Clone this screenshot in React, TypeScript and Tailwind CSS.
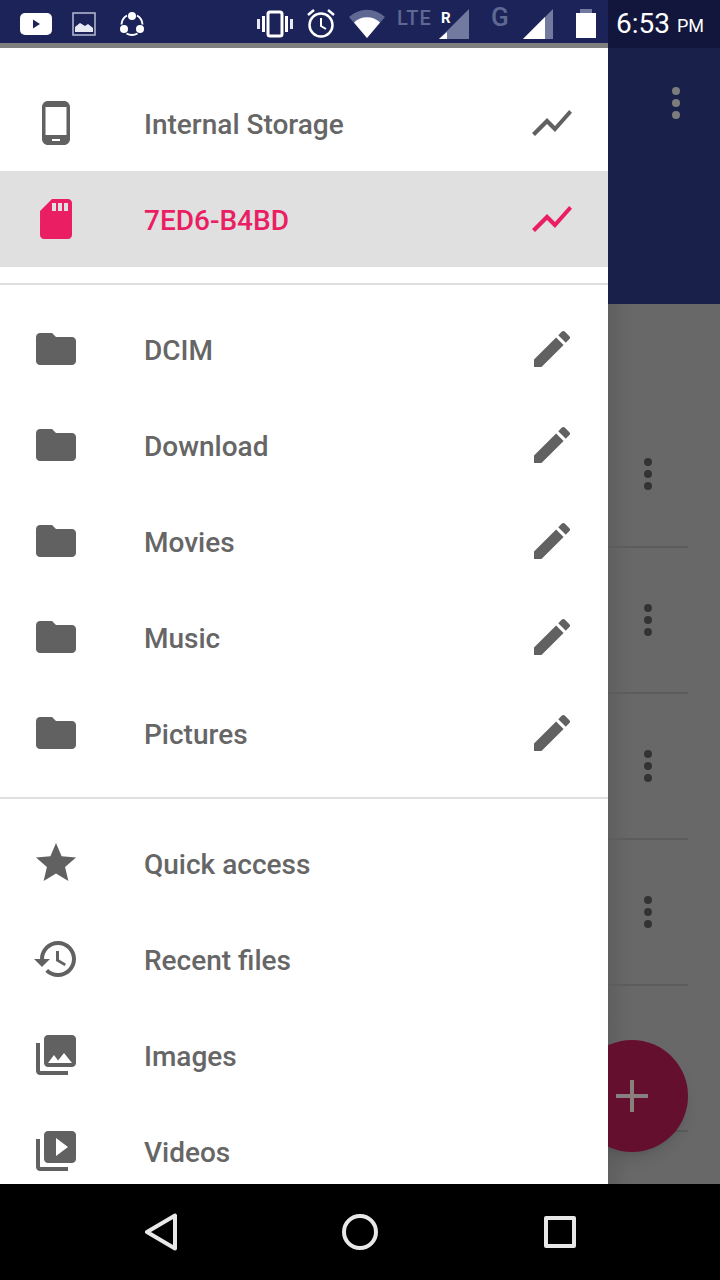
import type { ReactNode } from 'react';

const paths = {
  phone: 'M16 1H8C6.34 1 5 2.34 5 4v16c0 1.66 1.34 3 3 3h8c1.66 0 3-1.34 3-3V4c0-1.66-1.34-3-3-3zm-2 20h-4v-1h4v1zm3.25-3H6.75V4h10.5v14z',
  sd: 'M18 2h-8L4.02 8 4 20c0 1.1.9 2 2 2h12c1.1 0 2-.9 2-2V4c0-1.1-.9-2-2-2zm-6 6h-2V4h2v4zm3 0h-2V4h2v4zm3 0h-2V4h2v4z',
  chart: 'M3.5 18.49l6-6.01 4 4L22 6.92l-1.41-1.41-7.09 7.97-4-4L2 16.99z',
  folder: 'M10 4H4c-1.1 0-1.99.9-1.99 2L2 18c0 1.1.9 2 2 2h16c1.1 0 2-.9 2-2V8c0-1.1-.9-2-2-2h-8l-2-2z',
  pencil: 'M3 17.25V21h3.75L17.81 9.94l-3.75-3.75L3 17.25zM20.71 7.04c.39-.39.39-1.02 0-1.41l-2.34-2.34c-.39-.39-1.02-.39-1.41 0l-1.83 1.83 3.75 3.75 1.83-1.83z',
  star: 'M12 17.27L18.18 21l-1.64-7.03L22 9.24l-7.19-.61L12 2 9.19 8.63 2 9.24l5.46 4.73L5.82 21z',
  history: 'M13 3c-4.97 0-9 4.03-9 9H1l3.89 3.89.07.14L9 12H6c0-3.87 3.13-7 7-7s7 3.13 7 7-3.13 7-7 7c-1.93 0-3.68-.79-4.94-2.06l-1.42 1.42C8.27 19.99 10.51 21 13 21c4.97 0 9-4.03 9-9s-4.03-9-9-9zm-1 5v5l4.28 2.54.72-1.21-3.5-2.08V8H12z',
  images: 'M22 16V4c0-1.1-.9-2-2-2H8c-1.1 0-2 .9-2 2v12c0 1.1.9 2 2 2h12c1.1 0 2-.9 2-2zm-11-4l2.03 2.71L16 11l4 5H8l3-4zM2 6v14c0 1.1.9 2 2 2h14v-2H4V6H2z',
  videos: 'M4 6H2v14c0 1.1.9 2 2 2h14v-2H4V6zm16-4H8c-1.1 0-2 .9-2 2v12c0 1.1.9 2 2 2h12c1.1 0 2-.9 2-2V4c0-1.1-.9-2-2-2zm-8 12.5v-9l6 4.5-6 4.5z',
};

function Icon({ d, className }: { d: string; className?: string }) {
  return (
    <svg viewBox="0 0 24 24" className={`h-12 w-12 fill-current ${className ?? ''}`}>
      <path d={d} />
    </svg>
  );
}

function Row({ icon, label, action, selected }: { icon: string; label: string; action?: string; selected?: boolean }) {
  return (
    <div className={`flex h-24 shrink-0 items-center pl-8 pr-8 ${selected ? 'bg-[#e0e0e0] text-[#e91e63]' : 'text-[#616161]'}`}>
      <Icon d={icon} />
      <span className={`ml-16 flex-1 pt-1 text-[28px] font-medium ${selected ? '' : 'text-[#666666]'}`}>{label}</span>
      {action && <Icon d={action} />}
    </div>
  );
}

function Kebab({ dot }: { dot: string }) {
  return (
    <div className="flex flex-col gap-[4px]">
      <div className={`h-2 w-2 rounded-full ${dot}`} />
      <div className={`h-2 w-2 rounded-full ${dot}`} />
      <div className={`h-2 w-2 rounded-full ${dot}`} />
    </div>
  );
}

function StatusIcon({ w, children, className }: { w: number; children: ReactNode; className?: string }) {
  return (
    <svg width={w} height="48" viewBox={`0 0 ${w} 48`} className={`shrink-0 ${className ?? ''}`}>
      {children}
    </svg>
  );
}

function StatusBar() {
  return (
    <div className="flex h-12 shrink-0">
      <div className="flex w-[608px] flex-col">
        <div className="flex h-[43px] overflow-hidden bg-[#1b2359] pl-5">
          <StatusIcon w={32}>
            <rect x="0" y="13" width="32" height="22" rx="5" fill="#fff" />
            <path d="M13 19.5l7 4.5-7 4.5z" fill="#1b2359" />
          </StatusIcon>
          <StatusIcon w={24} className="ml-[20px]">
            <rect x="1" y="13" width="22" height="22" fill="none" stroke="#b8bdd2" strokeWidth="1.5" />
            <path d="M3 32v-5l5-4 5 3 3-2 5 4v4z" fill="#e8eaf2" />
          </StatusIcon>
          <StatusIcon w={24} className="ml-[24px]">
            <circle cx="12" cy="16" r="4" fill="#fff" />
            <circle cx="4" cy="29" r="4" fill="#fff" />
            <circle cx="20" cy="29" r="4" fill="#fff" />
            <path d="M7 15.5a11 11 0 0 0-5.5 9M17 15.5a11 11 0 0 1 5.5 9M6.5 33.5a11 11 0 0 0 11 0" fill="none" stroke="#fff" strokeWidth="2" />
          </StatusIcon>
          <StatusIcon w={36} className="ml-[113px]">
            <rect x="11" y="12" width="14" height="24" rx="2" fill="none" stroke="#fff" strokeWidth="3" />
            <rect x="0" y="19" width="3" height="10" fill="#e8eaf2" />
            <rect x="5" y="16" width="3" height="16" fill="#fff" />
            <rect x="28" y="16" width="3" height="16" fill="#fff" />
            <rect x="33" y="19" width="3" height="10" fill="#e8eaf2" />
          </StatusIcon>
          <StatusIcon w={28} className="ml-[14px]">
            <circle cx="14" cy="25" r="11.5" fill="none" stroke="#fff" strokeWidth="2.5" />
            <path d="M14 18v8l5 3" fill="none" stroke="#fff" strokeWidth="2" />
            <path d="M1 15l6-5M27 15l-6-5" stroke="#fff" strokeWidth="2.5" />
          </StatusIcon>
          <StatusIcon w={36} className="ml-[14px]">
            <path d="M0 17a26 26 0 0 1 36 0l-18 21z" fill="#5f6893" />
            <path d="M5 22.5a19 19 0 0 1 26 0l-13 15.5z" fill="#fff" />
          </StatusIcon>
          <div className="ml-[12px] w-[35px] pt-[7px] text-[20px] font-medium leading-[22px] tracking-[1px] text-[#5f6893]">LTE</div>
          <StatusIcon w={30} className="ml-[7px]">
            <path d="M0 39L30 9v30z" fill="#737a9f" />
            <path d="M0 39l8-7v7z" fill="#fff" />
            <text x="2" y="23" fontSize="15" fontWeight="700" fill="#fff">R</text>
          </StatusIcon>
          <div className="ml-[22px] w-[17px] pt-[3px] text-[26px] font-medium leading-[28px] text-[#5f6893]">G</div>
          <StatusIcon w={30} className="ml-[15px]">
            <path d="M0 39L30 9v30z" fill="#737a9f" />
            <path d="M0 39l22-22v22z" fill="#fff" />
          </StatusIcon>
          <StatusIcon w={20} className="ml-[23px]">
            <path d="M4 13V9h12v4z" fill="#737a9f" />
            <rect x="0" y="13" width="20" height="25" fill="#fff" />
          </StatusIcon>
        </div>
        <div className="h-[5px] bg-[#7f7f7f]" />
      </div>
      <div className="flex w-[112px] items-center bg-[#12163c] pl-[8px] text-white">
        <span className="text-[28px] leading-none">6:53</span>
        <span className="ml-[7px] mt-[3px] text-[18px] leading-none">PM</span>
      </div>
    </div>
  );
}

function Drawer() {
  return (
    <div className="relative z-10 flex h-full w-[608px] shrink-0 flex-col overflow-hidden bg-white pt-[27px]">
      <Row icon={paths.phone} label="Internal Storage" action={paths.chart} />
      <Row icon={paths.sd} label="7ED6-B4BD" action={paths.chart} selected />
      <div className="mt-4 mb-4 h-[2px] shrink-0 bg-[#e0e0e0]" />
      <Row icon={paths.folder} label="DCIM" action={paths.pencil} />
      <Row icon={paths.folder} label="Download" action={paths.pencil} />
      <Row icon={paths.folder} label="Movies" action={paths.pencil} />
      <Row icon={paths.folder} label="Music" action={paths.pencil} />
      <Row icon={paths.folder} label="Pictures" action={paths.pencil} />
      <div className="mt-4 mb-4 h-[2px] shrink-0 bg-[#e0e0e0]" />
      <Row icon={paths.star} label="Quick access" />
      <Row icon={paths.history} label="Recent files" />
      <Row icon={paths.images} label="Images" />
      <Row icon={paths.videos} label="Videos" />
    </div>
  );
}

function Backdrop() {
  const rows = [0, 1, 2, 3, 4];
  return (
    <div className="relative flex min-w-0 flex-1 flex-col">
      <div className="flex h-[256px] shrink-0 justify-end bg-[#192049] pr-10 pt-[39px]">
        <Kebab dot="bg-[#7c7c7c]" />
      </div>
      <div className="flex-1 overflow-hidden bg-gradient-to-r from-[#5f5f5f] to-[#686868] to-[20%] pt-[98px]">
        {rows.map((r) => (
          <div key={r} className="mr-8 flex h-[146px] items-center justify-end border-b-2 border-[#5c5c5c] pr-9">
            {r < 4 && <Kebab dot="bg-[#333333]" />}
          </div>
        ))}
      </div>
      {/* fab sits under the drawer, only its right part shows */}
      <div className="absolute -left-8 top-[992px] flex h-[112px] w-[112px] items-center justify-center rounded-full bg-[#650f2e] shadow-lg">
        <div className="relative h-8 w-8">
          <div className="absolute left-[14px] top-0 h-8 w-[4px] bg-[#8a7f7f]" />
          <div className="absolute left-0 top-[14px] h-[4px] w-8 bg-[#8a7f7f]" />
        </div>
      </div>
    </div>
  );
}

function NavBar() {
  return (
    <div className="flex h-24 shrink-0 items-center bg-black pl-[144px]">
      <svg width="34" height="38" viewBox="0 0 34 38" className="shrink-0">
        <path d="M31 2.5v33L3 19z" fill="none" stroke="#e8e8e8" strokeWidth="4" strokeLinejoin="round" />
      </svg>
      <div className="ml-[164px] h-[36px] w-[36px] rounded-full border-4 border-[#e8e8e8]" />
      <div className="ml-[166px] h-[32px] w-[32px] rounded-[2px] border-4 border-[#e8e8e8]" />
    </div>
  );
}

export default function App() {
  return (
    <div className="relative flex h-[1280px] w-[720px] flex-col overflow-hidden bg-white font-['Roboto',sans-serif]">
      <StatusBar />
      <div className="relative flex min-h-0 flex-1">
        <Drawer />
        <Backdrop />
      </div>
      <NavBar />
    </div>
  );
}
